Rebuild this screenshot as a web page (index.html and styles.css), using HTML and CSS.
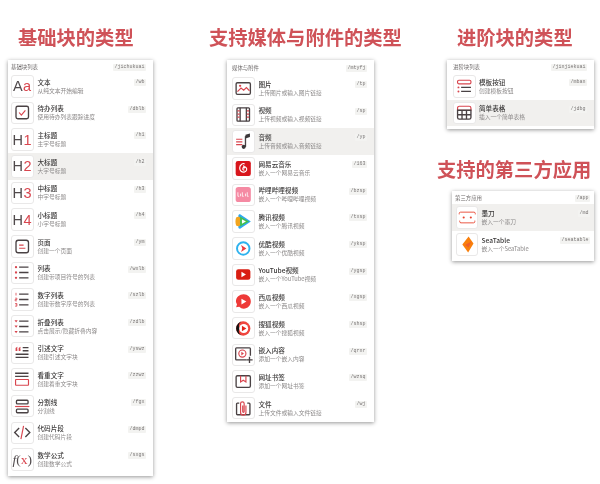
FILE: index.html
```html
<!DOCTYPE html>
<html lang="zh">
<head>
<meta charset="utf-8">
<title>块类型</title>
<link rel="stylesheet" href="styles.css">
</head>
<body>
<main class="page">
<section class="col col-basic">
<h2 class="title">基础块的类型</h2>
<div class="panel">
<div class="head"><span>基础块列表</span><code>/jichukuai</code></div>
<div class="row"><div class="ico glyph">A<b>a</b></div><div class="txt"><strong>文本</strong><small>从纯文本开始编辑</small></div><code>/wb</code></div>
<div class="row"><div class="ico"><svg viewBox="0 0 23 23"><rect class="d" x="4.500" y="4.500" width="14" height="14" rx="2"/><path class="r" d="M8 11.500l2.500 3 4.500-5.500"/></svg></div><div class="txt"><strong>待办列表</strong><small>使用待办列表跟踪进度</small></div><code>/dblb</code></div>
<div class="row"><div class="ico glyph">H<b>1</b></div><div class="txt"><strong>主标题</strong><small>主字号标题</small></div><code>/h1</code></div>
<div class="row on"><div class="ico glyph">H<b>2</b></div><div class="txt"><strong>大标题</strong><small>大字号标题</small></div><code>/h2</code></div>
<div class="row"><div class="ico glyph">H<b>3</b></div><div class="txt"><strong>中标题</strong><small>中字号标题</small></div><code>/h3</code></div>
<div class="row"><div class="ico glyph">H<b>4</b></div><div class="txt"><strong>小标题</strong><small>小字号标题</small></div><code>/h4</code></div>
<div class="row"><div class="ico"><svg viewBox="0 0 23 23"><rect class="d" x="4.500" y="4.500" width="14" height="14" rx="2.500"/><path class="r" d="M8 10h5M8 13.500h7"/></svg></div><div class="txt"><strong>页面</strong><small>创建一个页面</small></div><code>/ym</code></div>
<div class="row"><div class="ico"><svg viewBox="0 0 23 23"><path class="d" d="M8 5.500h10.500M8 11.500h10.500M8 17.500h10.500"/><circle class="rf" cx="4.500" cy="5.500" r="1.300"/><circle class="rf" cx="4.500" cy="11.500" r="1.300"/><circle class="rf" cx="4.500" cy="17.500" r="1.300"/></svg></div><div class="txt"><strong>列表</strong><small>创建带项目符号的列表</small></div><code>/wxlb</code></div>
<div class="row"><div class="ico"><svg viewBox="0 0 23 23"><path class="d" d="M8 5.500h10.500M8 11.500h10.500M8 17.500h10.500"/><path class="r thin" d="M4.500 4v3M3.500 10h2v1.500h-2v1.500h2M3.500 16h2v1.500h-1.500M3.500 19h2v-1.500"/></svg></div><div class="txt"><strong>数字列表</strong><small>创建带数字序号的列表</small></div><code>/szlb</code></div>
<div class="row"><div class="ico"><svg viewBox="0 0 23 23"><path class="d" d="M8 5.500h10.500M8 11.500h10.500M8 17.500h10.500"/><path class="rf" d="M2.800 4.500h3.600l-1.800 2.500zM2.800 10.500h3.600l-1.800 2.500zM2.800 16.500h3.600l-1.800 2.500z"/></svg></div><div class="txt"><strong>折叠列表</strong><small>点击展示/隐藏折叠内容</small></div><code>/zdlb</code></div>
<div class="row"><div class="ico"><svg viewBox="0 0 23 23"><path class="rf" d="M4 6.500l2-1.500v2l-.7.600h.7v2.200h-2zM7.500 6.500l2-1.500v2l-.7.600h.7v2.200h-2z"/><path class="d" d="M12 6h6.500M12 9.500h6.500M4 13.500h14.500M4 17h14.500"/></svg></div><div class="txt"><strong>引述文字</strong><small>创建引述文字块</small></div><code>/yswz</code></div>
<div class="row"><div class="ico"><svg viewBox="0 0 23 23"><path class="d" d="M3.500 4.500h15M3.500 8h15"/><rect class="r" x="4" y="11.500" width="14.500" height="6.500" rx=".5"/></svg></div><div class="txt"><strong>看重文字</strong><small>创建着重文字块</small></div><code>/zzwz</code></div>
<div class="row"><div class="ico"><svg viewBox="0 0 23 23"><rect class="d" x="5" y="4.500" width="13" height="4" rx="1"/><path class="r" d="M3.500 11.500h16"/><rect class="d" x="5" y="14.500" width="13" height="4" rx="1"/></svg></div><div class="txt"><strong>分割线</strong><small>分割线</small></div><code>/fgx</code></div>
<div class="row"><div class="ico"><svg viewBox="0 0 23 23"><path class="d" d="M8 6.500l-5 5 5 5M15 6.500l5 5-5 5"/><path class="r" d="M13 4l-3 15"/></svg></div><div class="txt"><strong>代码片段</strong><small>创建代码片段</small></div><code>/dmpd</code></div>
<div class="row"><div class="ico glyph math"><i>f</i>(<b>x</b>)</div><div class="txt"><strong>数学公式</strong><small>创建数学公式</small></div><code>/sxgs</code></div>
</div>
</section>

<section class="col col-media">
<h2 class="title">支持媒体与附件的类型</h2>
<div class="panel">
<div class="head tall"><span>媒体与附件</span><code>/mtyfj</code></div>
<div class="row"><div class="ico"><svg viewBox="0 0 23 23"><rect class="d" x="3.500" y="5" width="16" height="13" rx="1.500"/><path class="r" d="M5 15l4-4 3 2.500 3-3 3.500 3.500"/><circle class="rf" cx="8" cy="8.500" r="1.300"/></svg></div><div class="txt"><strong>图片</strong><small>上传图片或输入图片链接</small></div><code>/tp</code></div>
<div class="row"><div class="ico"><svg viewBox="0 0 23 23"><rect class="d" x="4.500" y="4" width="14" height="15" rx="1"/><path class="d" d="M8 4v15M15 4v15"/><path class="r" d="M5 7.500h2.500M5 11h2.500M5 14.500h2.500M15.500 7.500h2.500M15.500 11h2.500M15.500 14.500h2.500"/></svg></div><div class="txt"><strong>视频</strong><small>上传视频或输入视频链接</small></div><code>/sp</code></div>
<div class="row on"><div class="ico"><svg viewBox="0 0 23 23"><path class="r" d="M3.500 9h7M3.500 12h7M3.500 15h7"/><path class="d" d="M14 5.500v12"/><circle class="df" cx="12" cy="17.500" r="2.300"/><path class="df" d="M14 4l5-1.500v4l-5 1.500z"/></svg></div><div class="txt"><strong>音频</strong><small>上传音频或输入音频链接</small></div><code>/yp</code></div>
<div class="row"><div class="ico"><svg viewBox="0 0 23 23"><rect x="3" y="3" width="17" height="17" rx="2.500" fill="#d8161c"/><path class="w" d="M13 6.500c-1.500-1.500-5.500.5-5.500 4.500 0 3 2.500 5 5 4.500 3-.6 3.500-3.500 2.200-5-1.300-1.400-3.600-.8-3.700 1.200 0 1.200 1 1.800 1.800 1.500M11.800 8l1 3.500"/></svg></div><div class="txt"><strong>网易云音乐</strong><small>嵌入一个网易云音乐</small></div><code>/163</code></div>
<div class="row"><div class="ico"><svg viewBox="0 0 23 23"><rect x="3" y="3" width="17" height="17" rx="3" fill="#f58aa3"/><path class="w thin" d="M5.500 9v4.500h1.500M8.500 10.500v3M10.500 9v4.500h1.500M14 10.500v3M16 9v4.500h1.500"/></svg></div><div class="txt"><strong>哔哩哔哩视频</strong><small>嵌入一个哔哩哔哩视频</small></div><code>/bzsp</code></div>
<div class="row"><div class="ico"><svg viewBox="0 0 23 23"><path d="M8 3.500l12 8-12 8c-1 .5-2-.5-2-1.500V5c0-1 1-2 2-1.500z" fill="#2ea8ee"/><path d="M3.500 7c2-1.500 4-1 4.500.5v8c-.500 1.500-2.500 2-4.500.5-1-3-1-6 0-9z" fill="#f2a51f"/><path d="M8 6l10 5.500L8 17z" fill="#43c04a"/><path d="M10 9v5l4.500-2.500z" fill="#fff"/></svg></div><div class="txt"><strong>腾讯视频</strong><small>嵌入一个腾讯视频</small></div><code>/txsp</code></div>
<div class="row"><div class="ico"><svg viewBox="0 0 23 23"><circle cx="11.500" cy="11.500" r="7" fill="none" stroke="#2fb2ee" stroke-width="2.200"/><path d="M9 7.500l6 4-6 4 1.500-4z" fill="#ee3b3f"/></svg></div><div class="txt"><strong>优酷视频</strong><small>嵌入一个优酷视频</small></div><code>/yksp</code></div>
<div class="row"><div class="ico"><svg viewBox="0 0 23 23"><rect x="3.500" y="5.500" width="16" height="12" rx="2.500" fill="#d91e12"/><path d="M9.500 8.500v6l5-3z" fill="#fff"/></svg></div><div class="txt"><strong>YouTube视频</strong><small>嵌入一个YouTube视频</small></div><code>/ygsp</code></div>
<div class="row"><div class="ico"><svg viewBox="0 0 23 23"><path d="M12 3.500c4.500 0 8 3.500 8 8s-3.500 8-8 8c-2 0-3.500-.5-5-2l-3.500.5 1-3.500c-.8-1-1.200-2-1.200-3 0-4.500 4-8 8.700-8z" fill="#ee3a38"/><path d="M9.500 8.500l5.500 3-5.500 3.500z" fill="#fff"/></svg></div><div class="txt"><strong>西瓜视频</strong><small>嵌入一个西瓜视频</small></div><code>/xgsp</code></div>
<div class="row"><div class="ico"><svg viewBox="0 0 23 23"><circle cx="11.500" cy="11.500" r="8" fill="#f0453e"/><path d="M11.500 3.500a8 8 0 0 0 0 16 5 5 0 0 1-4-8 5 5 0 0 1 4-8z" fill="#111"/><circle cx="12" cy="11.500" r="5" fill="#fff"/><path d="M10 8.500l5 3-5 3z" fill="#e2231a"/></svg></div><div class="txt"><strong>搜狐视频</strong><small>嵌入一个搜狐视频</small></div><code>/shsp</code></div>
<div class="row"><div class="ico"><svg viewBox="0 0 23 23"><path class="d" d="M15 17.500H4a1 1 0 0 1-1-1V5a1 1 0 0 1 1-1h14.500a1 1 0 0 1 1 1v8"/><circle class="r" cx="10.500" cy="10.500" r="4"/><path class="rf" d="M9.300 8.500l3 2-3 2z"/><path class="d" d="M18.500 14v7M15 17.500h7"/></svg></div><div class="txt"><strong>嵌入内容</strong><small>添加一个嵌入内容</small></div><code>/qrnr</code></div>
<div class="row"><div class="ico"><svg viewBox="0 0 23 23"><rect class="d" x="3.500" y="5" width="16" height="13" rx="1.500"/><path class="r" d="M8.500 5v7l3-2 3 2V5"/></svg></div><div class="txt"><strong>网址书签</strong><small>添加一个网址书签</small></div><code>/wzsq</code></div>
<div class="row"><div class="ico"><svg viewBox="0 0 23 23"><path class="d" d="M7 5.500H5a1 1 0 0 0-1 1v11a1 1 0 0 0 1 1h13a1 1 0 0 0 1-1v-11a1 1 0 0 0-1-1h-2"/><path class="r" d="M14.500 8v8a3 3 0 0 1-6 0V6a2 2 0 0 1 4 0v9a.8.800 0 0 1-1.600 0V8"/></svg></div><div class="txt"><strong>文件</strong><small>上传文件或输入文件链接</small></div><code>/wj</code></div>
</div>
</section>

<section class="col col-side">
<h2 class="title">进阶块的类型</h2>
<div class="panel adv">
<div class="head"><span>进阶块列表</span><code>/jinjiekuai</code></div>
<div class="row"><div class="ico"><svg viewBox="0 0 23 23"><rect class="r" x="4" y="4.500" width="15" height="4" rx="1.500"/><path class="d" d="M8 12.500h11M8 17h11"/><circle class="rf" cx="5" cy="12.500" r="1.100"/><circle class="rf" cx="5" cy="17" r="1.100"/></svg></div><div class="txt"><strong>模板按钮</strong><small>创建模板按钮</small></div><code>/mban</code></div>
<div class="row on"><div class="ico"><svg viewBox="0 0 23 23"><path class="r" d="M4 9V6.500A2 2 0 0 1 6 4.500h11a2 2 0 0 1 2 2V9z"/><path class="d" d="M4 9h15v8a2 2 0 0 1-2 2H6a2 2 0 0 1-2-2zM4 14h15M9 9v10M14 9v10"/></svg></div><div class="txt"><strong>简单表格</strong><small>插入一个简单表格</small></div><code>/jdbg</code></div>
</div>
<h2 class="title second">支持的第三方应用</h2>
<div class="panel app">
<div class="head"><span>第三方应用</span><code>/app</code></div>
<div class="row on"><div class="ico"><svg viewBox="0 0 23 23"><path class="e" d="M2.500 8V7a1.500 1.500 0 0 1 1.500-1.500h15A1.500 1.500 0 0 1 20.500 7v1M3 15v1a1.500 1.500 0 0 0 1.500 1.500h14a1.500 1.500 0 0 0 1.500-1.500v-1"/><circle cx="7.500" cy="11.500" r="1.200" fill="#e8432e"/><circle cx="15.500" cy="11.500" r="1.200" fill="#e8432e"/></svg></div><div class="txt"><strong>墨刀</strong><small>嵌入一个墨刀</small></div><code>/md</code></div>
<div class="row"><div class="ico"><svg viewBox="0 0 23 23"><path d="M13 2.500l5.500 8-6 10-6.500-9z" fill="#f97f0b"/><path d="M9 12l7-4-3 7z" fill="#ef5d2b"/></svg></div><div class="txt"><strong>SeaTable</strong><small>嵌入一个SeaTable</small></div><code>/seatable</code></div>
</div>
</section>
</main>
</body>
</html>
```

FILE: styles.css
```css
* { box-sizing: border-box; }
html, body { margin: 0; padding: 0; background: #fff; }
body { width: 600px; height: 484px; overflow: hidden; font-family: "Noto Sans CJK SC", "Noto Sans", sans-serif; color: #3f3c3c; }
.page { display: flex; align-items: flex-start; padding: 25px 0 0 8px; filter: blur(.35px); }
.col { display: flex; flex-direction: column; }
.col-basic { width: 145px; }
.col-media { width: 147px; margin-left: 74px; }
.col-side { width: 147px; margin-left: 73px; }

.title { margin: 0 0 11px; height: 24px; font-size: 19.300px; line-height: 24px; font-weight: 700; color: #cf5258; white-space: nowrap; }
.col-basic .title { margin-left: 10px; }
.col-media .title { margin-left: -18px; }
.col-side .title { margin-left: 10px; }
.col-side .title.second { margin: 28px 0 10px -10px; }

.panel { background: #fff; box-shadow: 0 1px 4px rgba(0, 0, 0, .42); padding-bottom: 3px; --inset: 3px; --gap: 4px; --right: 7px; }
.col-media .panel { --inset: 5px; padding-bottom: 0; }
.adv { --inset: 6px; --gap: 3.500px; }
.app { margin-left: 5px; --inset: 3.500px; --gap: 3.500px; --right: 4px; }

.head { display: flex; align-items: center; justify-content: space-between; height: 13px; padding: 1px var(--right) 0 3px; font-size: 5.400px; color: #6f6b6b; }
.head.tall { height: 15px; padding-left: 5px; }
.adv .head { padding-left: 6px; }
.app .head { padding-left: 3px; }

code { font-family: "Liberation Mono", monospace; font-size: 5px; line-height: 7px; padding: 0 1.500px; background: #f3f3f1; color: #7a7676; border-radius: 1px; white-space: nowrap; }

.row { display: flex; align-items: center; height: 26.670px; padding: 0 var(--right) 0 var(--inset); gap: var(--gap); }
.row.on { background: #f1f0ee; }
.row > code { align-self: flex-start; margin-top: 6px; }

.ico { flex: none; width: 22.500px; height: 22.500px; background: #fff; border: 1px solid #e9e8e8; border-radius: 3px; display: flex; align-items: center; justify-content: center; }
.ico svg { width: 21px; height: 21px; display: block; }
.glyph { font-family: "Liberation Sans", sans-serif; font-size: 14.500px; color: #504a4c; letter-spacing: .4px; }
.glyph b { font-weight: 400; color: #d9464f; }
.math { font-family: "Liberation Serif", serif; font-size: 13.500px; letter-spacing: 0; }

.txt { flex: 1; min-width: 0; display: flex; flex-direction: column; gap: 1px; }
.txt strong { font-size: 6.600px; line-height: 8px; font-weight: 500; color: #3b3939; white-space: nowrap; }
.txt small { font-size: 5.750px; line-height: 8px; color: #8c8989; white-space: nowrap; }

svg .d { fill: none; stroke: #4a4244; stroke-width: 1.500; }
svg .r { fill: none; stroke: #d9464f; stroke-width: 1.300; }
svg .rf { fill: #d9464f; }
svg .df { fill: #3b3739; }
svg .w { fill: none; stroke: #fff; stroke-width: 1.300; }
svg .e { fill: none; stroke: #e8432e; stroke-width: 1; }
svg .thin { stroke-width: .9; }
```
